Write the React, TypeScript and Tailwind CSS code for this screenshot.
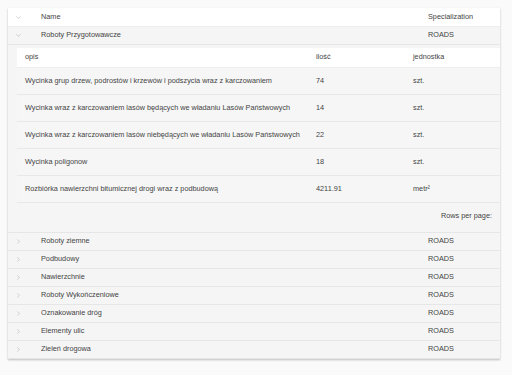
import { ChevronDown, ChevronRight } from "lucide-react"

const items = [
  { opis: "Wycinka grup drzew, podrostów i krzewów i podszycia wraz z karczowaniem", ilosc: "74", jm: "szt." },
  { opis: "Wycinka wraz z karczowaniem lasów będących we władaniu Lasów Państwowych", ilosc: "14", jm: "szt." },
  { opis: "Wycinka wraz z karczowaniem lasów niebędących we władaniu Lasów Państwowych", ilosc: "22", jm: "szt." },
  { opis: "Wycinka poligonow", ilosc: "18", jm: "szt." },
  { opis: "Rozbiórka nawierzchni bitumicznej drogi wraz z podbudową", ilosc: "4211.91", jm: "metr²" },
]

const groups = [
  "Roboty ziemne",
  "Podbudowy",
  "Nawierzchnie",
  "Roboty Wykończeniowe",
  "Oznakowanie dróg",
  "Elementy ulic",
  "Zieleń drogowa",
]

function GroupRow({ name, open }: { name: string; open?: boolean }) {
  return (
    <div className="flex items-center h-[18px] bg-[#f5f5f5] border-b border-[#e6e6e6]">
      <div className="w-[33px] pl-[7px] text-[#9a9a9a]">
        {open ? <ChevronDown size={7} strokeWidth={1.5} /> : <ChevronRight size={7} strokeWidth={1.5} />}
      </div>
      <div className="flex-1">{name}</div>
      <div className="w-[72px]">ROADS</div>
    </div>
  )
}

export default function App() {
  return (
    <div className="min-h-screen bg-[#fafafa] p-2 pr-3 text-[7.3px] text-[#444444] font-['Liberation_Sans',Arial,sans-serif]">
      <div className="bg-white shadow-[0_1px_2px_rgba(0,0,0,0.25)]">
        <div className="flex items-center h-[19px] bg-white border-b border-[#eeeeee]">
          <div className="w-[33px] pl-[7px] text-[#9a9a9a]">
            <ChevronDown size={7} strokeWidth={1.5} />
          </div>
          <div className="flex-1">Name</div>
          <div className="w-[72px]">Specialization</div>
        </div>

        <GroupRow name="Roboty Przygotowawcze" open />

        <div className="bg-[#f5f5f5] pl-[9px] pt-[3px] pb-[2px] border-b border-[#e6e6e6]">
          <div className="flex items-center h-[20px] bg-white pl-2 border-b border-[#eeeeee]">
            <div className="w-[291px]">opis</div>
            <div className="w-[97px]">ilość</div>
            <div className="flex-1">jednostka</div>
          </div>
          {items.map((it) => (
            <div key={it.opis} className="flex items-center h-[27px] bg-[#f6f6f6] pl-2 border-b border-[#e8e8e8]">
              <div className="w-[291px] whitespace-nowrap">{it.opis}</div>
              <div className="w-[97px]">{it.ilosc}</div>
              <div className="flex-1">{it.jm}</div>
            </div>
          ))}
          <div className="flex items-center justify-end h-[27px] pr-2">Rows per page:</div>
        </div>

        {groups.map((g) => (
          <GroupRow key={g} name={g} />
        ))}
      </div>
    </div>
  )
}
